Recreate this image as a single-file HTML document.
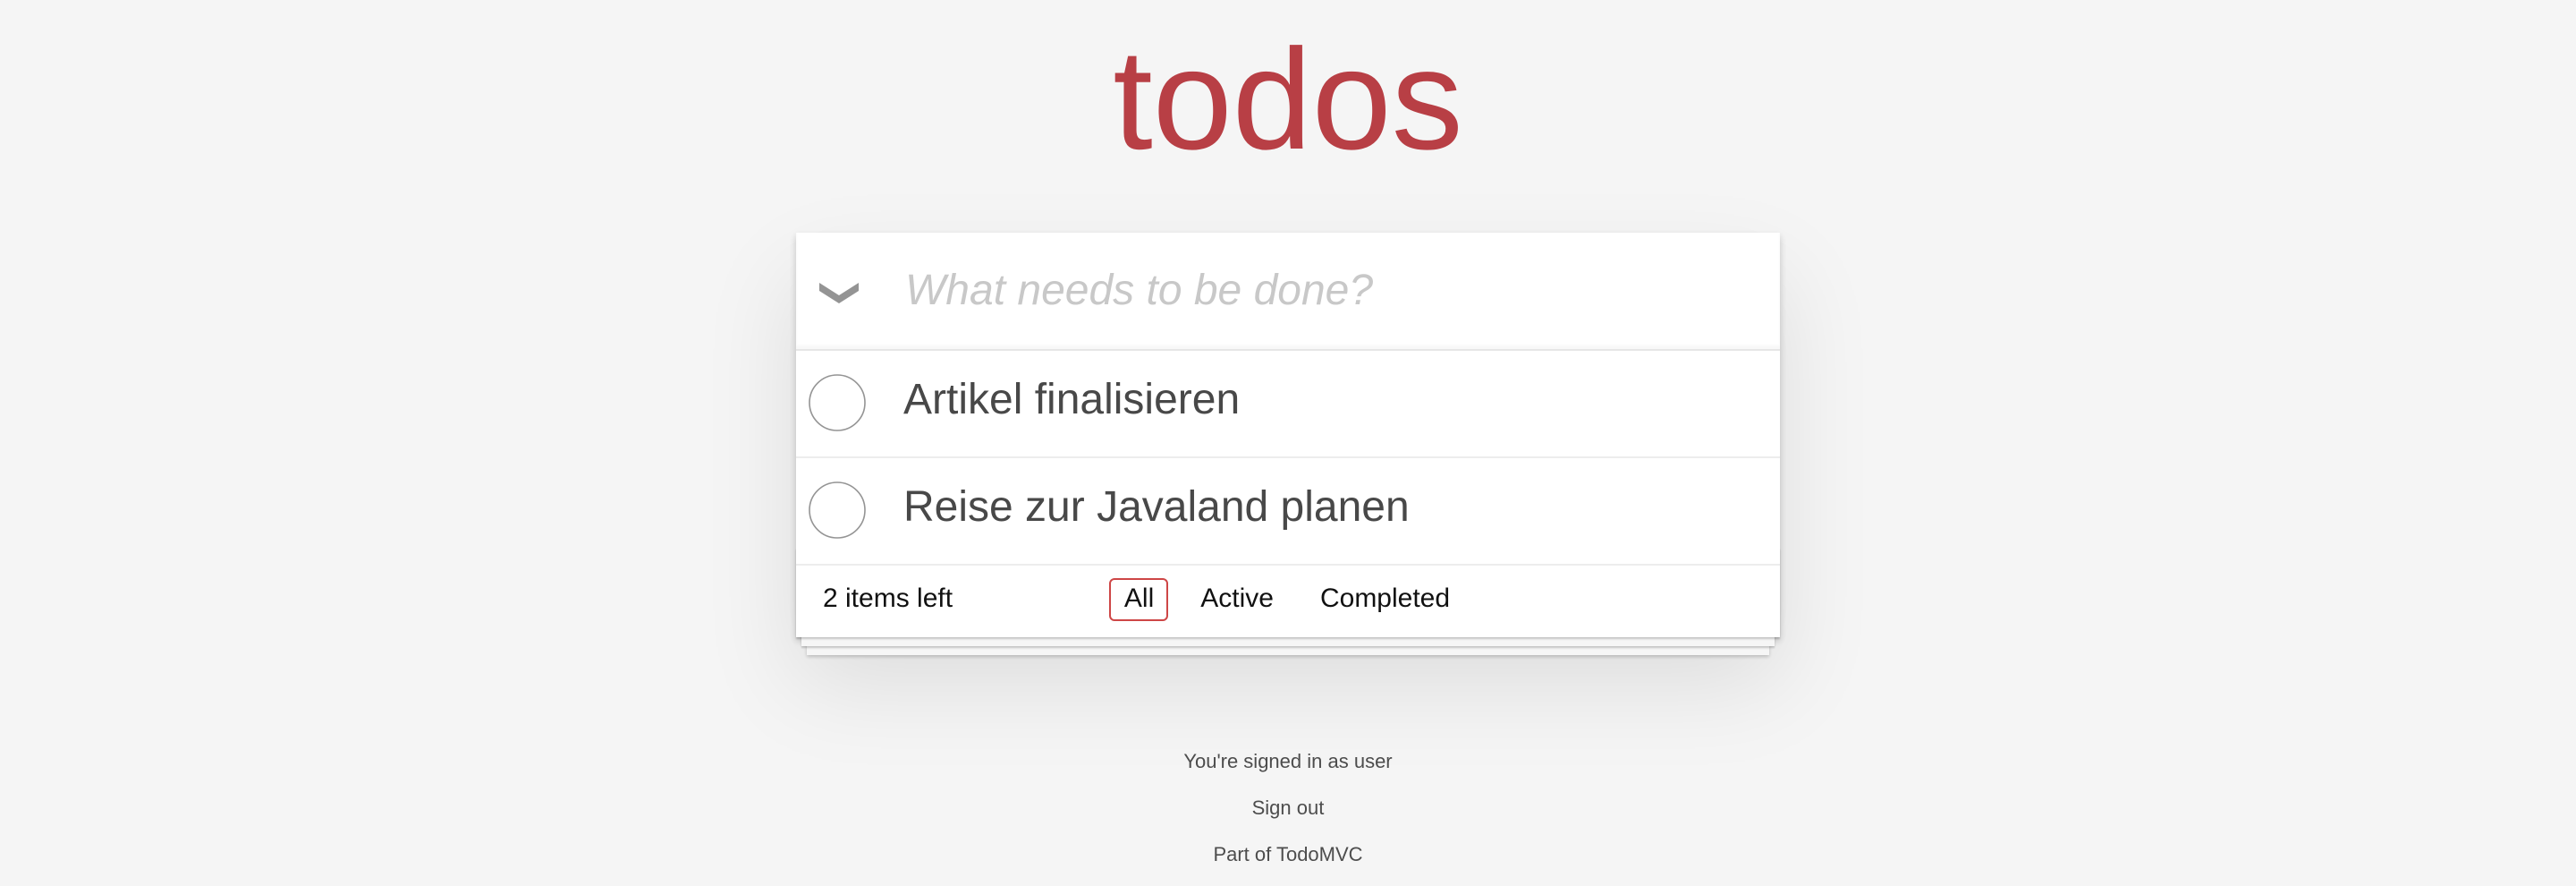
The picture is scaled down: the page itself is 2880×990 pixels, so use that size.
<!DOCTYPE html>
<html><head><meta charset="utf-8">
<style>
html,body{margin:0;padding:0;width:2880px;height:990px;overflow:hidden;background:#f5f5f5;}
#wrap{transform:scale(2);transform-origin:0 0;width:1440px;height:495px;position:relative;font:14px "Liberation Sans",Helvetica,Arial,sans-serif;line-height:1.4em;color:#111;}
.spacer{height:130px;}
.todoapp{background:#fff;margin:0 auto 40px;position:relative;width:550px;box-shadow:0 2px 4px 0 rgba(0,0,0,.2),0 25px 50px 0 rgba(0,0,0,.1);}
h1{position:absolute;top:-130px;width:100%;font-size:80px;font-weight:200;text-align:center;color:#b83f45;margin:0;line-height:112px;}
.header{position:relative;height:66px;box-sizing:border-box;box-shadow:inset 0 -2px 1px rgba(0,0,0,.03);border-bottom:1px solid #e6e6e6;}
.ph{position:absolute;left:61px;top:0;line-height:65px;font-size:24px;font-style:italic;color:#c8c8c8;}
.chev{position:absolute;left:6px;top:14px;width:36px;height:36px;}
ul{margin:0;padding:0;list-style:none;}
li{position:relative;font-size:24px;border-bottom:1px solid #ededed;height:59px;}
li .c{position:absolute;left:3px;top:9px;width:40px;height:40px;}
li label{position:absolute;left:60px;top:0;line-height:56px;color:#484848;}
.footer{position:relative;padding:9px 15px 11px;height:20px;font-size:15px;line-height:20px;text-align:center;color:#111;}
.footer:before{content:'';position:absolute;right:0;bottom:0;left:0;height:50px;overflow:hidden;box-shadow:0 1px 1px rgba(0,0,0,.2),0 8px 0 -3px #f6f6f6,0 9px 1px -3px rgba(0,0,0,.2),0 16px 0 -6px #f6f6f6,0 17px 2px -6px rgba(0,0,0,.2);}
.count{float:left;text-align:left;position:relative;}
.filters{position:absolute;left:-1px;right:0;top:7px;margin:0;padding:0;}
.filters span{display:inline-block;margin:0 5px;padding:1px 7px;border:1px solid transparent;border-radius:3px;line-height:20px;}
.filters span.sel{border-color:#ce4646;}
.info{margin:63px auto 0;color:#4d4d4d;font-size:11px;text-align:center;}
.info p{line-height:15px;margin:0 0 11px;}
</style></head><body>
<div id="wrap">
<div class="spacer"></div>
<section class="todoapp">
<h1>todos</h1>
<div class="header">
<svg class="chev" viewBox="0 0 36 36"><path d="M7 14 L18 21 L29 14 L29 18.5 L18 25.5 L7 18.5 Z" fill="#949494"/></svg>
<div class="ph">What needs to be done?</div>
</div>
<ul>
<li><svg class="c" viewBox="0 0 40 40"><circle cx="20" cy="20" r="15.5" fill="none" stroke="#949494" stroke-width="0.8"/></svg><label>Artikel finalisieren</label></li>
<li><svg class="c" viewBox="0 0 40 40"><circle cx="20" cy="20" r="15.5" fill="none" stroke="#949494" stroke-width="0.8"/></svg><label>Reise zur Javaland planen</label></li>
</ul>
<div class="footer">
<span class="count">2 items left</span>
<div class="filters"><span class="sel">All</span><span>Active</span><span>Completed</span></div>
</div>
</section>
<div class="info">
<p>You're signed in as user</p>
<p>Sign out</p>
<p>Part of TodoMVC</p>
</div>
</div>
</body></html>
